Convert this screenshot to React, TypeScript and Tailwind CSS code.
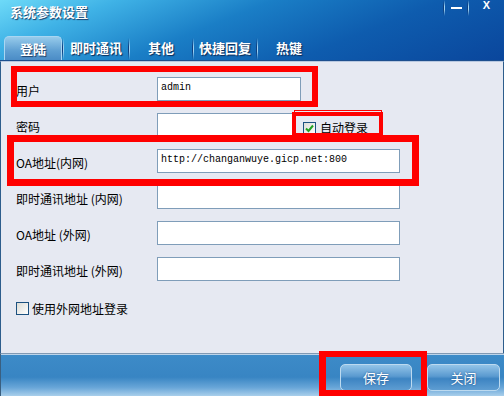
const cjk = "font-['Noto_Sans_CJK_SC',sans-serif]";

function Sep({ h = "h-[22px]" }: { h?: string }) {
  return (
    <div className={`flex ${h}`}>
      <div className="w-px h-full bg-[linear-gradient(to_bottom,transparent,#0e3f80_40%,#0e3f80_60%,transparent)]" />
      <div className="w-px h-full bg-[linear-gradient(to_bottom,transparent,#9fd2f2_40%,#9fd2f2_60%,transparent)]" />
    </div>
  );
}

function Field({ label, width, value }: { label: string; width: string; value?: string }) {
  return (
    <div className="flex items-center h-[24px]">
      <div className={`w-[156px] shrink-0 pl-[15px] text-[12px] text-black leading-none pt-[3px] ${cjk}`}>{label}</div>
      <div className={`${width} shrink-0 h-[24px] bg-white border border-[#7f9db9] pl-[3px] pt-[4px] text-[10px] leading-[12px] text-black font-['Liberation_Mono',monospace]`}>
        {value}
      </div>
    </div>
  );
}

export default function App() {
  const tabs = [
    { name: "即时通讯", w: "w-[64px]" },
    { name: "其他", w: "w-[62px]" },
    { name: "快捷回复", w: "w-[62px]" },
    { name: "热键", w: "w-[62px]" },
  ];

  return (
    <div className={`relative w-[504px] h-[396px] overflow-hidden flex flex-col ${cjk}`}>
      {/* Title bar + tabs */}
      <div className="h-[61px] flex flex-col border-b border-[#1d4f8e] bg-[linear-gradient(158deg,#6edaf8_0%,#3fb2e6_18%,#1a7ec6_42%,#0e5cae_68%,#0a469c_100%)]">
        <div className="h-[35px] flex items-start">
          <div className="pl-[10px] pt-[4px] text-[13px] leading-[15px] font-bold text-white [text-shadow:1px_1px_1px_#1b3c66]">
            系统参数设置
          </div>
          <div className="ml-auto flex items-start">
            <Sep h="h-[16px]" />
            <div className="w-[22px] h-[16px] flex justify-center pt-[7px]">
              <div className="w-[11px] h-[2px] bg-white" />
            </div>
            <Sep h="h-[16px]" />
            <div className="w-[35px] flex justify-center pt-[1px] text-white text-[11px] font-bold leading-[9px] font-['Liberation_Sans',sans-serif]">
              X
            </div>
          </div>
        </div>
        <div className="h-[25px] flex items-end pl-[4px]">
          <div className="w-[58px] h-[24px] rounded-t-[5px] border border-b-0 border-[#a9d6f2] bg-[linear-gradient(to_bottom,#97cbeb,#5f9fd2_60%,#4b8cc6)] flex items-center justify-center text-[13px] font-bold text-white [text-shadow:1px_1px_1px_#1b3c66]">
            登陆
          </div>
          {tabs.map((t) => (
            <div key={t.name} className="flex items-end">
              <Sep />
              <div className={`${t.w} h-[24px] flex items-center justify-center text-[13px] font-bold text-white [text-shadow:1px_1px_1px_#0d2a55]`}>
                {t.name}
              </div>
            </div>
          ))}
        </div>
      </div>

      {/* Content */}
      <div className="h-[292px] bg-[#e6e9f2] border-t border-[#b8c8e0] border-l border-l-[#2d5d8c] border-r border-r-[#2d5d8c] pt-[15px] flex flex-col gap-[12px]">
        <Field label="用户" width="w-[144px]" value="admin" />
        <div className="flex items-center">
          <Field label="密码" width="w-[136px]" />
          <div className="ml-[10px] flex items-center gap-[4px] pt-[6px]">
            <div className="w-[13px] h-[13px] border border-[#1c5180] bg-[linear-gradient(135deg,#dcdcd6,#ffffff)] flex items-center justify-center">
              <svg width="9" height="9" viewBox="0 0 9 9">
                <path d="M1 4.5 L3.5 7 L8 1.5" fill="none" stroke="#21a121" strokeWidth="2" />
              </svg>
            </div>
            <span className="text-[12px] text-black leading-none">自动登录</span>
          </div>
        </div>
        <Field label="OA地址(内网)" width="w-[243px]" value="http://changanwuye.gicp.net:800" />
        <Field label="即时通讯地址 (内网)" width="w-[243px]" />
        <Field label="OA地址 (外网)" width="w-[243px]" />
        <Field label="即时通讯地址 (外网)" width="w-[243px]" />
        <div className="flex items-center gap-[3px] pl-[15px] mt-[9px]">
          <div className="w-[13px] h-[13px] border border-[#1c5180] bg-[linear-gradient(135deg,#dcdcd6,#ffffff)]" />
          <span className="text-[12px] text-black leading-none">使用外网地址登录</span>
        </div>
      </div>

      {/* Bottom bar */}
      <div className="h-[43px] border-t border-[#8199b3] shadow-[inset_0_1px_0_#bcd4ea] border-l border-l-[#3a5f80] bg-[linear-gradient(to_bottom,#3d8bc8_0%,#3885c3_55%,#69a6d8_80%,#a9cfeb_100%)] flex justify-end items-start pt-[10px] pr-[4px] gap-[15px]">
        <div className="w-[72px] h-[27px] rounded-[5px] border border-[#bcdaf0] bg-[linear-gradient(to_bottom,#93c4e8,#5a9ad0_45%,#3d84c2_55%,#5e9dd2)] flex items-center justify-center text-[13px] text-white [text-shadow:0_0_2px_#1f4f86]">
          保存
        </div>
        <div className="w-[73px] h-[27px] rounded-[5px] border border-[#bcdaf0] bg-[linear-gradient(to_bottom,#93c4e8,#5a9ad0_45%,#3d84c2_55%,#5e9dd2)] flex items-center justify-center text-[13px] text-white [text-shadow:0_0_2px_#1f4f86]">
          关闭
        </div>
      </div>

      {/* Red annotation boxes */}
      <div className="absolute left-[11px] top-[66px] w-[307px] h-[41px] border-[6px] border-[#ff0000]" />
      <div className="absolute left-[294px] top-[110px] w-[88px] h-[26px] border border-[#ff0000]" />
      <div className="absolute left-[292px] top-[112px] w-[91px] h-[25px] border-[4px] border-[#ff0000]" />
      <div className="absolute left-[7px] top-[135px] w-[412px] h-[51px] border-[7px] border-[#ff0000]" />
      <div className="absolute left-[319px] top-[351px] w-[108px] h-[45px] border-[6px] border-l-[7px] border-[#ff0000]" />
    </div>
  );
}
